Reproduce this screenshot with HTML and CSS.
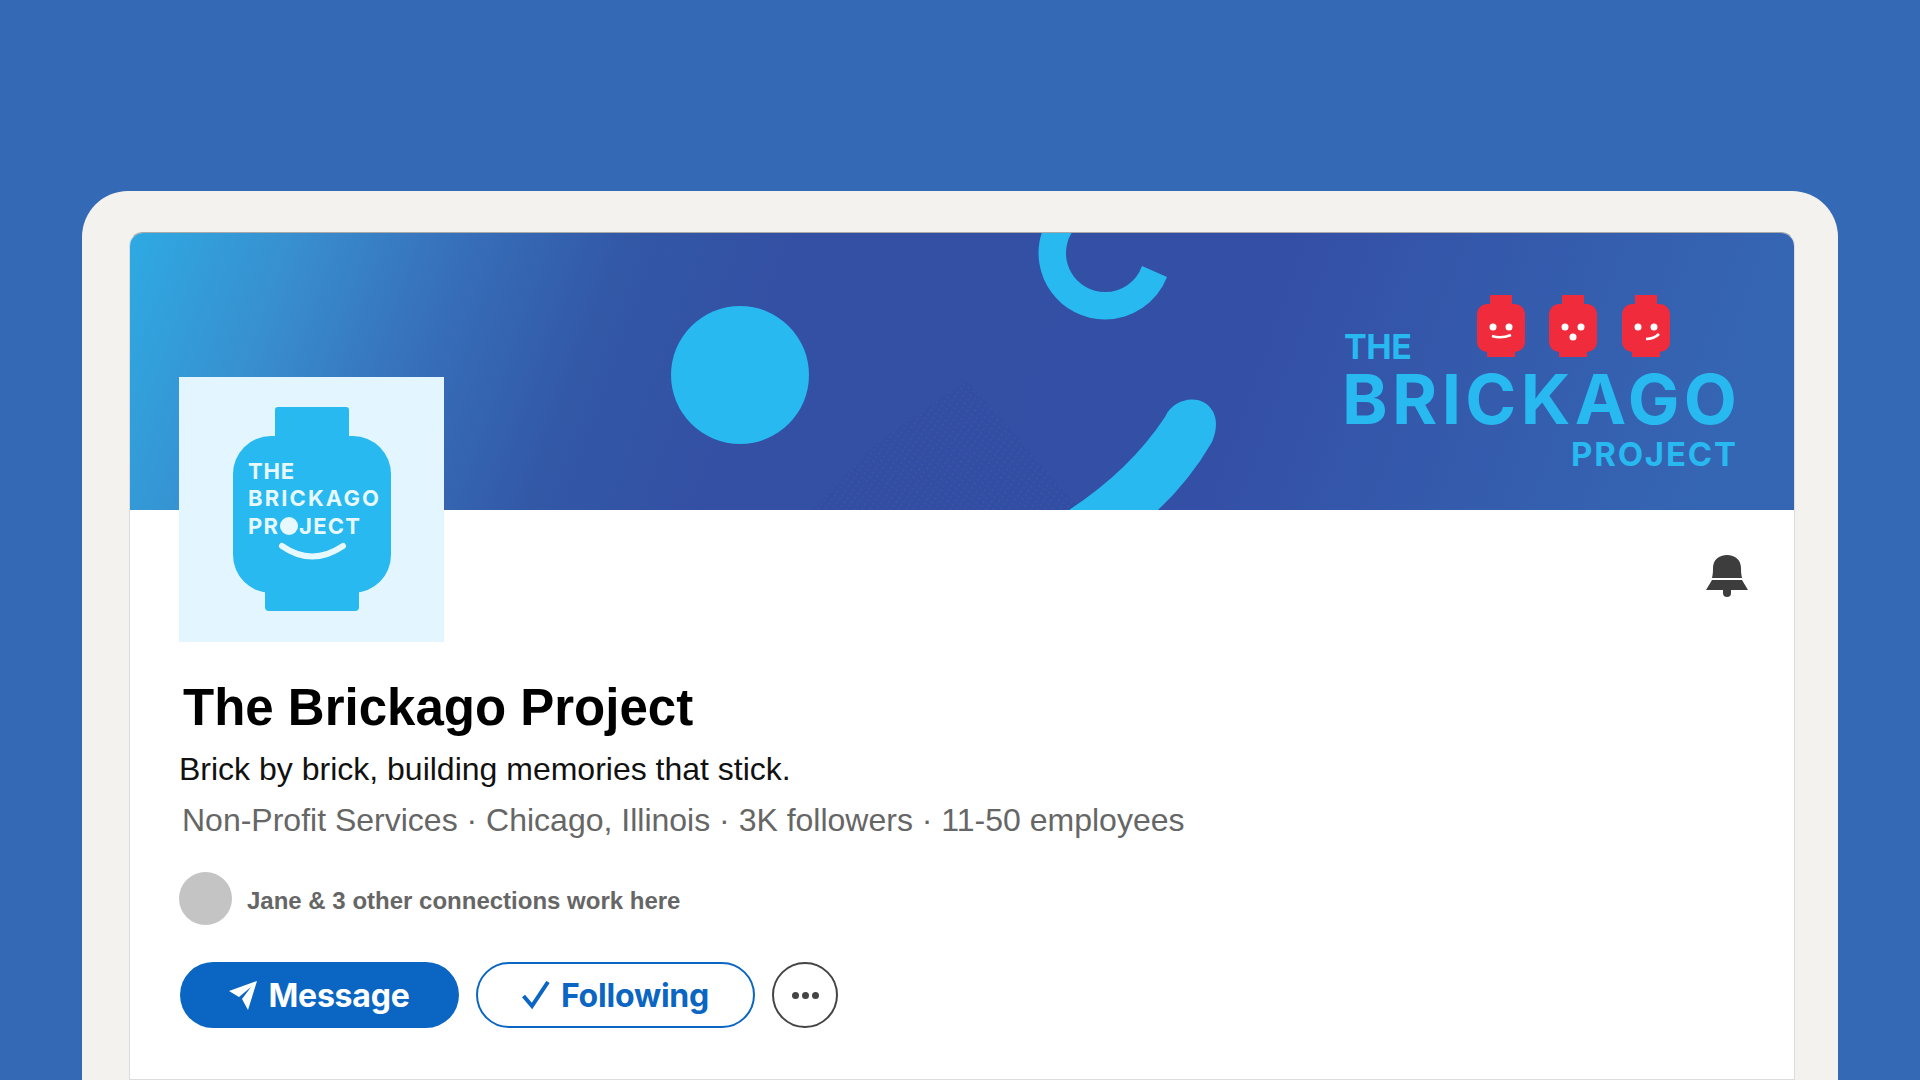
FILE: index.html
```html
<!DOCTYPE html>
<html lang="en">

<head>
    <meta charset="UTF-8">
    <meta name="viewport" content="width=device-width, initial-scale=1.0">
    <title>The Brickago Project</title>
    <link rel="stylesheet" href="styles.css">
</head>

<body>
    <div class="frame">
        <div class="card">
            <svg class="banner" viewBox="130 233 1664 277">
                <defs>
                    <linearGradient id="bannerFill" x1="0" y1="0" x2="1" y2="0.06">
                        <stop offset="0" stop-color="#2eaae3" />
                        <stop offset="0.1" stop-color="#388fcf" />
                        <stop offset="0.2" stop-color="#376fba" />
                        <stop offset="0.3" stop-color="#3258a6" />
                        <stop offset="0.4" stop-color="#3450a4" />
                        <stop offset="0.7" stop-color="#3450a6" />
                        <stop offset="1" stop-color="#3566b3" />
                    </linearGradient>
                    <pattern id="dots" width="6" height="5" patternUnits="userSpaceOnUse" patternTransform="rotate(35)">
                        <rect width="6" height="5" fill="#2f489f" />
                        <circle cx="2" cy="2" r="0.7" fill="#4b8a8c" />
                    </pattern>
                    <path id="head" d="M-11 -32 h22 v9 h3 a10 10 0 0 1 10 10 v28 a10 10 0 0 1 -10 10 v5 h-28 v-5 a10 10 0 0 1 -10 -10 v-28 a10 10 0 0 1 10 -10 h3 z" />
                </defs>
                <rect x="130" y="233" width="1664" height="277" fill="url(#bannerFill)" />
                <path class="shade" d="M967 380 L1020 440 L1081 510 L812 510 L880 440 Z" />
                <circle class="shape" cx="740" cy="375" r="69" />
                <path class="shape" d="M1041.6 233 A66.5 66.5 0 0 0 1105 319.5 A66.5 66.5 0 0 0 1167 277 L1142 266 A39 39 0 0 1 1105 292 A39 39 0 0 1 1071.5 233 Z" />
                <path class="shape" d="M1069 510 Q1130 470 1165 417 C1172 401 1192 395 1205 403 C1217 411 1219 426 1212 442 Q1190 480 1158 510 Z" />

                <text class="word" x="1344" y="359" font-size="34" textLength="68">THE</text>
                <text class="word" x="1342" y="424" font-size="69" textLength="395">BRICKAGO</text>
                <text class="word" x="1571" y="466" font-size="33" textLength="165">PROJECT</text>

                <g transform="translate(1501 327)">
                    <use href="#head" class="brick" />
                    <circle class="face" cx="-8" cy="0" r="3.5" />
                    <circle class="face" cx="8" cy="0" r="3.5" />
                    <path class="smile" d="M-9 9 Q0 12 10 8" />
                </g>
                <g transform="translate(1573 327)">
                    <use href="#head" class="brick" />
                    <circle class="face" cx="-8" cy="0" r="3.5" />
                    <circle class="face" cx="8" cy="0" r="3.5" />
                    <circle class="face" cx="0" cy="10" r="3.5" />
                </g>
                <g transform="translate(1646 327)">
                    <use href="#head" class="brick" />
                    <circle class="face" cx="-8" cy="0" r="3.5" />
                    <circle class="face" cx="8" cy="0" r="3.5" />
                    <path class="smile" d="M0 12 Q8 12 13 7" />
                </g>
            </svg>

            <div class="profile">
                <div class="top-row">
                    <svg class="logo" viewBox="179 377 265 265">
                        <rect x="179" y="377" width="265" height="265" fill="#e3f6ff" />
                        <rect class="shape" x="275" y="407" width="74" height="40" rx="3" />
                        <rect class="shape" x="233" y="436" width="158" height="157" rx="38" />
                        <rect class="shape" x="265" y="580" width="94" height="31" rx="4" />
                        <text class="mark" x="248" y="479" font-size="22" textLength="46">THE</text>
                        <text class="mark" x="248" y="506" font-size="22" textLength="131">BRICKAGO</text>
                        <text class="mark" x="248" y="534" font-size="22" textLength="30">PR</text>
                        <circle cx="289" cy="526" r="9" fill="#e8f8ff" />
                        <text class="mark" x="299" y="534" font-size="22" textLength="61">JECT</text>
                        <path d="M282 546 Q312 567 343 546" fill="none" stroke="#e8f8ff" stroke-width="6" stroke-linecap="round" />
                    </svg>
                    <svg class="bell" viewBox="0 0 42 42">
                        <path d="M6 23 C7 19 7 15 7 13 C7 5 13 0 21 0 C29 0 35 5 35 13 C35 15 35 19 36 23 Z" />
                        <path d="M6 25 H36 L42 35 H0 Z" />
                        <path d="M17 35 H25 V38 A4 4 0 0 1 17 38 Z" />
                    </svg>
                </div>

                <h1 class="name">The Brickago Project</h1>
                <p class="tagline">Brick by brick, building memories that stick.</p>
                <p class="meta">Non-Profit Services · Chicago, Illinois · 3K followers · 11-50 employees</p>

                <div class="connections">
                    <div class="avatar"></div>
                    <span>Jane &amp; 3 other connections work here</span>
                </div>

                <div class="actions">
                    <button class="btn btn-primary">
                        <svg class="btn-icon" viewBox="0 0 28 29">
                            <path d="M28 0 L0 10 L10 16 L22 6 L13 18 L19 29 Z" />
                        </svg>
                        Message
                    </button>
                    <button class="btn btn-outline">
                        <svg class="btn-icon" viewBox="0 0 28 29">
                            <path d="M1.5 15 L10 25 L26 1" fill="none" stroke-width="4" />
                        </svg>
                        Following
                    </button>
                    <button class="btn-more">
                        <i></i><i></i><i></i>
                    </button>
                </div>
            </div>
        </div>
    </div>
</body>

</html>
```

FILE: styles.css
```css
body {
    margin: 0;
    height: 1080px;
    overflow: hidden;
    background-color: #3469b6;
    font-family: "Liberation Sans", Arial, sans-serif;
}

.frame {
    box-sizing: border-box;
    width: 1756px;
    height: 889px;
    margin: 191px 0 0 82px;
    padding: 41px 43px 0 47px;
    background-color: #f4f2ee;
    border-radius: 46px 46px 0 0;
}

.card {
    height: 846px;
    background-color: #fff;
    border: 1px solid #dcdcdc;
    border-top-color: #a9a9a9;
    border-radius: 14px 14px 0 0;
    overflow: hidden;
}

.banner {
    display: block;
    width: 1664px;
    height: 277px;
}

.shape {
    fill: #27b9f0;
}

.shade {
    fill: url(#dots);
    opacity: 0.35;
}

.word {
    fill: #27b9f0;
    font-family: Inter, sans-serif;
    font-weight: 700;
}

.mark {
    fill: #e8f8ff;
    font-family: Inter, sans-serif;
    font-weight: 700;
}

.brick {
    fill: #ef2b3c;
}

.face {
    fill: #fff;
}

.smile {
    fill: none;
    stroke: #fff;
    stroke-width: 2.5;
}

.profile {
    padding-left: 49px;
}

.top-row {
    position: relative;
    display: flex;
    justify-content: space-between;
    align-items: flex-start;
    margin-top: -133px;
}

.logo {
    display: block;
    width: 265px;
    height: 265px;
}

.bell {
    width: 42px;
    height: 42px;
    margin: 178px 46px 0 0;
    fill: #3d3d3d;
}

.name {
    margin: 37px 0 0 4px;
    font-size: 51px;
    line-height: 58px;
    font-weight: 700;
    color: #000;
}

.tagline {
    margin: 12px 0 0 0;
    font-size: 32px;
    line-height: 40px;
    color: #111;
}

.meta {
    margin: 11px 0 0 3px;
    font-size: 32px;
    line-height: 40px;
    color: #666;
}

.connections {
    display: flex;
    align-items: center;
    gap: 15px;
    margin-top: 32px;
    font-size: 24px;
    font-weight: 700;
    color: #666;
}

.connections span {
    position: relative;
    top: 2px;
}

.avatar {
    width: 53px;
    height: 53px;
    border-radius: 50%;
    background-color: #c4c4c4;
}

.actions {
    display: flex;
    align-items: center;
    gap: 17px;
    margin: 37px 0 0 1px;
}

.btn {
    display: flex;
    justify-content: center;
    align-items: center;
    gap: 11px;
    box-sizing: border-box;
    width: 279px;
    height: 66px;
    border-radius: 33px;
    padding: 0;
    font-family: Inter, sans-serif;
    font-size: 32px;
    font-weight: 700;
    letter-spacing: -0.2px;
}

.btn-primary {
    color: #fff;
    background-color: #0a66c2;
    border: none;
}

.btn-primary .btn-icon {
    fill: #fff;
}

.btn-outline {
    color: #0a66c2;
    background-color: #fff;
    border: 2px solid #0a66c2;
}

.btn-outline .btn-icon {
    stroke: #0a66c2;
}

.btn-icon {
    width: 28px;
    height: 29px;
}

.btn-more {
    display: flex;
    justify-content: center;
    align-items: center;
    gap: 3px;
    box-sizing: border-box;
    width: 66px;
    height: 66px;
    padding: 0;
    background-color: #fff;
    border: 2px solid #444;
    border-radius: 50%;
}

.btn-more i {
    display: block;
    width: 7px;
    height: 7px;
    border-radius: 50%;
    background-color: #444;
}
```
